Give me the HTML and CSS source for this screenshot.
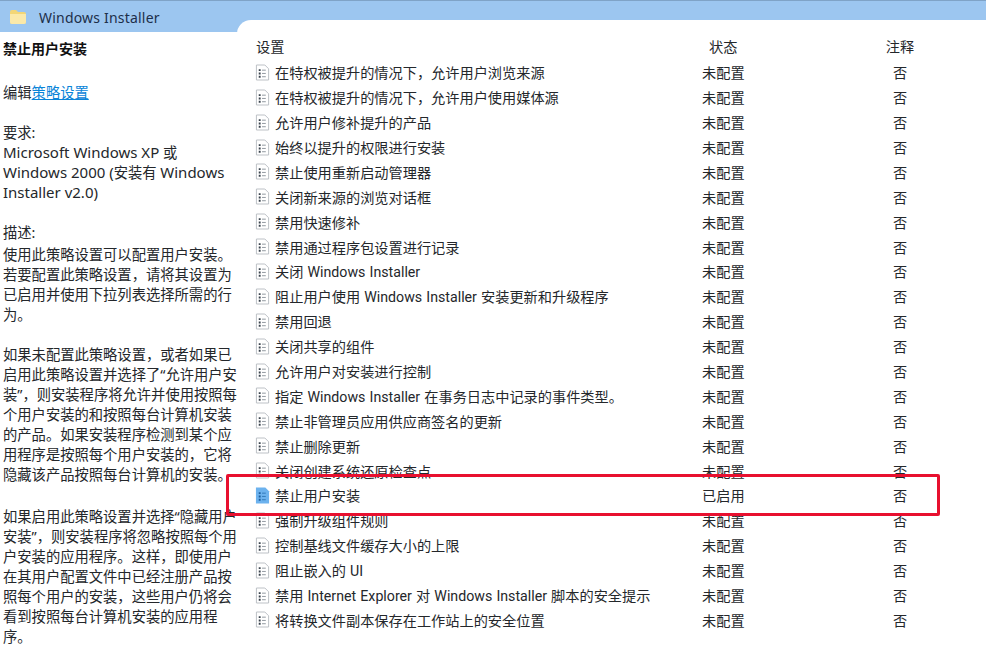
FILE: index.html
```html
<!DOCTYPE html>
<html lang="zh-CN">
<head>
    <meta charset="UTF-8">
    <title>Windows Installer</title>
    <link rel="stylesheet" href="styles.css">
</head>
<body>
    <svg class="defs" width="0" height="0">
        <symbol id="doc" viewBox="0 0 16 17">
            <path d="M1.5 .5h9l4 4v12h-13z" fill="#fff" stroke="#b9bdc2"/>
            <path d="M4 5h2v2h-2zM4 8.5h2v2h-2zM4 12h2v2h-2z" fill="#39424c"/>
            <path d="M7.5 6h4M7.5 9.5h4M7.5 13h4" stroke="#8b929a"/>
        </symbol>
        <symbol id="doc-on" viewBox="0 0 16 17">
            <path d="M1 0h10l4 4v13h-14z" fill="#6cb2ee"/>
            <path d="M4 5h2v2h-2zM4 8.5h2v2h-2zM4 12h2v2h-2z" fill="#1c5f9e"/>
            <path d="M7.5 6h4M7.5 9.5h4M7.5 13h4" stroke="#2f78b8"/>
        </symbol>
    </svg>

    <div class="title-bar">
        <svg class="folder" width="18" height="16" viewBox="0 0 18 16">
            <path d="M1 3q0-2 2-2h4l2 2h6q2 0 2 2v8q0 2-2 2h-12q-2 0-2-2z" fill="#f3d676"/>
            <path d="M1 5h16v8q0 2-2 2h-12q-2 0-2-2z" fill="#fbe9a9"/>
        </svg>
        <span>Windows Installer</span>
    </div>

    <div class="content">
        <div class="desc">
            <h1>禁止用户安装</h1>
            <p class="edit">编辑<a href="#">策略设置</a></p>
            <p class="req">要求:<br><span class="en">Microsoft Windows XP</span> 或<br><span class="en">Windows 2000 (</span>安装有 <span class="en">Windows</span><br><span class="en">Installer v2.0)</span></p>
            <p class="label">描述:</p>
            <p>使用此策略设置可以配置用户安装。<br>若要配置此策略设置，请将其设置为<br>已启用并使用下拉列表选择所需的行<br>为。</p>
            <p>如果未配置此策略设置，或者如果已<br>启用此策略设置并选择了“允许用户安<br>装”，则安装程序将允许并使用按照每<br>个用户安装的和按照每台计算机安装<br>的产品。如果安装程序检测到某个应<br>用程序是按照每个用户安装的，它将<br>隐藏该产品按照每台计算机的安装。</p>
            <p class="last">如果启用此策略设置并选择“隐藏用户<br>安装”，则安装程序将忽略按照每个用<br>户安装的应用程序。这样，即使用户<br>在其用户配置文件中已经注册产品按<br>照每个用户的安装，这些用户仍将会<br>看到按照每台计算机安装的应用程<br>序。</p>
        </div>

        <div class="list">
            <div class="row head"><span>设置</span><span class="state">状态</span><span class="note">注释</span></div>
            <div class="row"><span class="name"><svg class="icon"><use href="#doc"/></svg>在特权被提升的情况下，允许用户浏览来源</span><span class="state">未配置</span><span class="note">否</span></div>
            <div class="row"><span class="name"><svg class="icon"><use href="#doc"/></svg>在特权被提升的情况下，允许用户使用媒体源</span><span class="state">未配置</span><span class="note">否</span></div>
            <div class="row"><span class="name"><svg class="icon"><use href="#doc"/></svg>允许用户修补提升的产品</span><span class="state">未配置</span><span class="note">否</span></div>
            <div class="row"><span class="name"><svg class="icon"><use href="#doc"/></svg>始终以提升的权限进行安装</span><span class="state">未配置</span><span class="note">否</span></div>
            <div class="row"><span class="name"><svg class="icon"><use href="#doc"/></svg>禁止使用重新启动管理器</span><span class="state">未配置</span><span class="note">否</span></div>
            <div class="row"><span class="name"><svg class="icon"><use href="#doc"/></svg>关闭新来源的浏览对话框</span><span class="state">未配置</span><span class="note">否</span></div>
            <div class="row"><span class="name"><svg class="icon"><use href="#doc"/></svg>禁用快速修补</span><span class="state">未配置</span><span class="note">否</span></div>
            <div class="row"><span class="name"><svg class="icon"><use href="#doc"/></svg>禁用通过程序包设置进行记录</span><span class="state">未配置</span><span class="note">否</span></div>
            <div class="row"><span class="name"><svg class="icon"><use href="#doc"/></svg>关闭 Windows Installer</span><span class="state">未配置</span><span class="note">否</span></div>
            <div class="row"><span class="name"><svg class="icon"><use href="#doc"/></svg>阻止用户使用 Windows Installer 安装更新和升级程序</span><span class="state">未配置</span><span class="note">否</span></div>
            <div class="row"><span class="name"><svg class="icon"><use href="#doc"/></svg>禁用回退</span><span class="state">未配置</span><span class="note">否</span></div>
            <div class="row"><span class="name"><svg class="icon"><use href="#doc"/></svg>关闭共享的组件</span><span class="state">未配置</span><span class="note">否</span></div>
            <div class="row"><span class="name"><svg class="icon"><use href="#doc"/></svg>允许用户对安装进行控制</span><span class="state">未配置</span><span class="note">否</span></div>
            <div class="row"><span class="name"><svg class="icon"><use href="#doc"/></svg>指定 Windows Installer 在事务日志中记录的事件类型。</span><span class="state">未配置</span><span class="note">否</span></div>
            <div class="row"><span class="name"><svg class="icon"><use href="#doc"/></svg>禁止非管理员应用供应商签名的更新</span><span class="state">未配置</span><span class="note">否</span></div>
            <div class="row"><span class="name"><svg class="icon"><use href="#doc"/></svg>禁止删除更新</span><span class="state">未配置</span><span class="note">否</span></div>
            <div class="row"><span class="name"><svg class="icon"><use href="#doc"/></svg>关闭创建系统还原检查点</span><span class="state">未配置</span><span class="note">否</span></div>
            <div class="row selected"><span class="name"><svg class="icon"><use href="#doc-on"/></svg>禁止用户安装</span><span class="state">已启用</span><span class="note">否</span></div>
            <div class="row"><span class="name"><svg class="icon"><use href="#doc"/></svg>强制升级组件规则</span><span class="state">未配置</span><span class="note">否</span></div>
            <div class="row"><span class="name"><svg class="icon"><use href="#doc"/></svg>控制基线文件缓存大小的上限</span><span class="state">未配置</span><span class="note">否</span></div>
            <div class="row"><span class="name"><svg class="icon"><use href="#doc"/></svg>阻止嵌入的 UI</span><span class="state">未配置</span><span class="note">否</span></div>
            <div class="row"><span class="name"><svg class="icon"><use href="#doc"/></svg>禁用 Internet Explorer 对 Windows Installer 脚本的安全提示</span><span class="state">未配置</span><span class="note">否</span></div>
            <div class="row"><span class="name"><svg class="icon"><use href="#doc"/></svg>将转换文件副本保存在工作站上的安全位置</span><span class="state">未配置</span><span class="note">否</span></div>
        </div>
    </div>
</body>
</html>
```

FILE: styles.css
```css
html, body {
    height: 100%;
}
body {
    margin: 0;
    background-color: #fff;
    color: #24272b;
    font-family: "Noto Sans", "Noto Sans CJK SC", sans-serif;
    font-size: 14.3px;
    overflow: hidden;
}
.defs {
    display: block;
}
.title-bar {
    background-color: #9cc6f0;
    border-top: 1px solid #7fa3c7;
    display: flex;
    align-items: flex-start;
    gap: 12px;
    padding: 8px 0 0 9px;
    box-sizing: border-box;
    height: 32px;
    color: #1c2f4a;
}
.title-bar span {
    font-size: 14px;
    line-height: 18px;
    letter-spacing: .2px;
}
.folder {
    flex: none;
}
.content {
    display: flex;
}
.desc {
    width: 237px;
    flex: none;
    padding: 7px 0 0 3px;
    box-sizing: border-box;
    line-height: 20px;
}
.desc h1 {
    margin: 0;
    font-size: 14px;
    line-height: 20px;
    font-weight: bold;
    color: #111;
}
.desc p {
    margin: 0 0 20px;
    white-space: nowrap;
}
.desc p.edit {
    margin: 24px 0 20px;
}
.desc p.label {
    margin: 0 0 2px;
}
.desc p.last {
    margin-top: 22px;
}
.desc a {
    color: #0a84d8;
}
.en {
    font-size: 15px;
    line-height: 1;
}
.list {
    flex: 1;
    background-color: #fff;
    margin-top: -12px;
    padding-top: 14px;
    border-top-left-radius: 14px;
    position: relative;
    font-family: Roboto, "Noto Sans CJK SC", sans-serif;
    font-size: 14.2px;
    word-spacing: .6px;
}
.row {
    display: grid;
    grid-template-columns: 447px 170px 56px;
    align-items: center;
    height: 24.9px;
    padding-left: 18px;
    white-space: nowrap;
}
.row.head {
    padding-left: 19px;
    margin-bottom: 1px;
}
.name {
    display: flex;
    align-items: center;
    gap: 5px;
}
.icon {
    width: 15px;
    height: 17px;
    flex: none;
}
.note {
    text-align: center;
}
.head .state {
    padding-left: 6px;
}
.head .note {
    padding-right: 2px;
}
.selected::after {
    content: "";
    position: absolute;
    left: -11px;
    width: 708px;
    height: 36px;
    border: 3px solid #e8102f;
    border-radius: 2px;
    pointer-events: none;
}
```
